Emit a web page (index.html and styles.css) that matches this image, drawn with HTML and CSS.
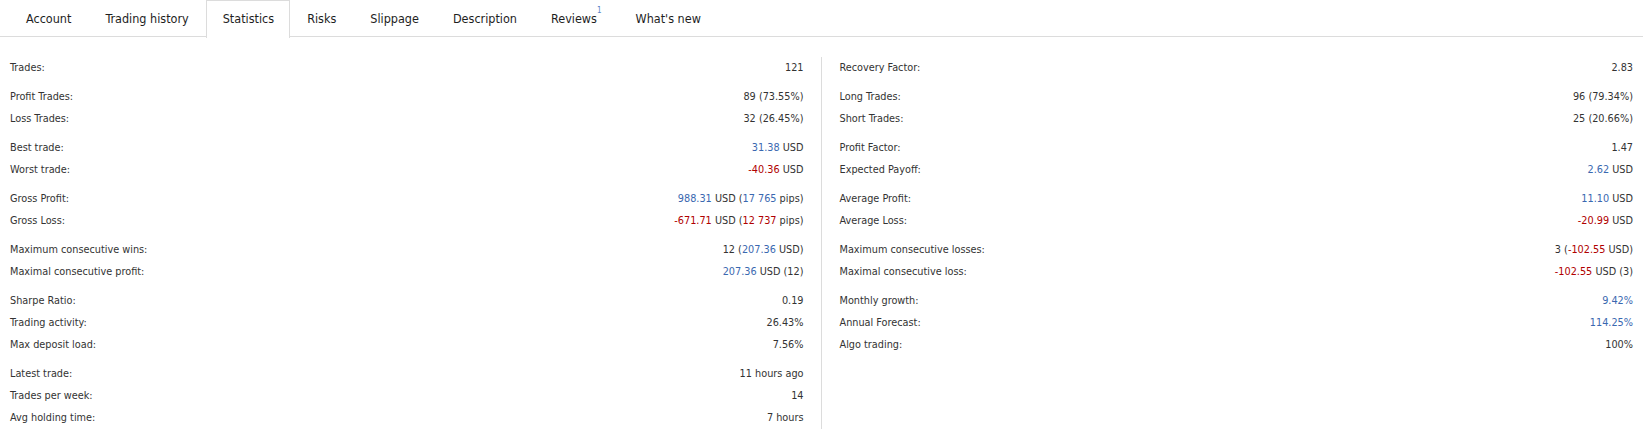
FILE: index.html
```html
<!DOCTYPE html>
<html lang="en">
<head>
<meta charset="utf-8">
<title>Statistics</title>
<link rel="stylesheet" href="styles.css">
</head>
<body>
<nav class="tabs">
  <a class="tab">Account</a>
  <a class="tab">Trading history</a>
  <a class="tab active">Statistics</a>
  <a class="tab">Risks</a>
  <a class="tab">Slippage</a>
  <a class="tab">Description</a>
  <a class="tab">Reviews<sup class="count">1</sup></a>
  <a class="tab">What's new</a>
</nav>
<main class="stats">
  <section class="col col-left">
    <div class="group">
      <div class="row"><span class="label">Trades:</span><span class="val">121</span></div>
    </div>
    <div class="group">
      <div class="row"><span class="label">Profit Trades:</span><span class="val">89 (73.55%)</span></div>
      <div class="row"><span class="label">Loss Trades:</span><span class="val">32 (26.45%)</span></div>
    </div>
    <div class="group">
      <div class="row"><span class="label">Best trade:</span><span class="val"><span class="pos">31.38</span> USD</span></div>
      <div class="row"><span class="label">Worst trade:</span><span class="val"><span class="neg">-40.36</span> USD</span></div>
    </div>
    <div class="group">
      <div class="row"><span class="label">Gross Profit:</span><span class="val"><span class="pos">988.31</span> USD (<span class="pos">17 765</span> pips)</span></div>
      <div class="row"><span class="label">Gross Loss:</span><span class="val"><span class="neg">-671.71</span> USD (<span class="neg">12 737</span> pips)</span></div>
    </div>
    <div class="group">
      <div class="row"><span class="label">Maximum consecutive wins:</span><span class="val">12 (<span class="pos">207.36</span> USD)</span></div>
      <div class="row"><span class="label">Maximal consecutive profit:</span><span class="val"><span class="pos">207.36</span> USD (12)</span></div>
    </div>
    <div class="group">
      <div class="row"><span class="label">Sharpe Ratio:</span><span class="val">0.19</span></div>
      <div class="row"><span class="label">Trading activity:</span><span class="val">26.43%</span></div>
      <div class="row"><span class="label">Max deposit load:</span><span class="val">7.56%</span></div>
    </div>
    <div class="group">
      <div class="row"><span class="label">Latest trade:</span><span class="val">11 hours ago</span></div>
      <div class="row"><span class="label">Trades per week:</span><span class="val">14</span></div>
      <div class="row"><span class="label">Avg holding time:</span><span class="val">7 hours</span></div>
    </div>
  </section>
  <section class="col col-right">
    <div class="group">
      <div class="row"><span class="label">Recovery Factor:</span><span class="val">2.83</span></div>
    </div>
    <div class="group">
      <div class="row"><span class="label">Long Trades:</span><span class="val">96 (79.34%)</span></div>
      <div class="row"><span class="label">Short Trades:</span><span class="val">25 (20.66%)</span></div>
    </div>
    <div class="group">
      <div class="row"><span class="label">Profit Factor:</span><span class="val">1.47</span></div>
      <div class="row"><span class="label">Expected Payoff:</span><span class="val"><span class="pos">2.62</span> USD</span></div>
    </div>
    <div class="group">
      <div class="row"><span class="label">Average Profit:</span><span class="val"><span class="pos">11.10</span> USD</span></div>
      <div class="row"><span class="label">Average Loss:</span><span class="val"><span class="neg">-20.99</span> USD</span></div>
    </div>
    <div class="group">
      <div class="row"><span class="label">Maximum consecutive losses:</span><span class="val">3 (<span class="neg">-102.55</span> USD)</span></div>
      <div class="row"><span class="label">Maximal consecutive loss:</span><span class="val"><span class="neg">-102.55</span> USD (3)</span></div>
    </div>
    <div class="group">
      <div class="row"><span class="label">Monthly growth:</span><span class="val"><span class="pos">9.42%</span></span></div>
      <div class="row"><span class="label">Annual Forecast:</span><span class="val"><span class="pos">114.25%</span></span></div>
      <div class="row"><span class="label">Algo trading:</span><span class="val">100%</span></div>
    </div>
  </section>
</main>
</body>
</html>
```
FILE: styles.css
```css
html, body {
  margin: 0;
  padding: 0;
  background: #fff;
}
body {
  font-family: "DejaVu Sans Condensed", "DejaVu Sans", sans-serif;
  color: #333;
}
.tabs {
  display: flex;
  height: 36px;
  padding-left: 9px;
  border-bottom: 1px solid #dcdcdc;
}
.tab {
  display: block;
  padding: 0 16px;
  line-height: 36px;
  font-size: 12.5px;
  color: #1e1e1e;
  white-space: nowrap;
  border: 1px solid transparent;
  border-bottom: none;
}
.tab.active {
  background: #fff;
  border-color: #dcdcdc;
  height: 37px;
  line-height: 35px;
  padding: 0 15px 0 16px;
}
.count {
  display: inline-block;
  vertical-align: top;
  font-size: 8px;
  line-height: 1;
  margin-top: 6px;
  color: #5b86c8;
}
.stats {
  display: grid;
  grid-template-columns: 1fr 1fr;
  padding: 20px 10px 0;
}
.col-left {
  padding-right: 17px;
  border-right: 1px solid #dcdcdc;
}
.col-right {
  padding-left: 18px;
}
.group + .group {
  margin-top: 7px;
}
.row {
  display: flex;
  justify-content: space-between;
  height: 22px;
  line-height: 22px;
  font-size: 10.8px;
  white-space: nowrap;
}
.val {
  text-align: right;
}
.pos {
  color: #3a68b0;
}
.neg {
  color: #b00000;
}
```
